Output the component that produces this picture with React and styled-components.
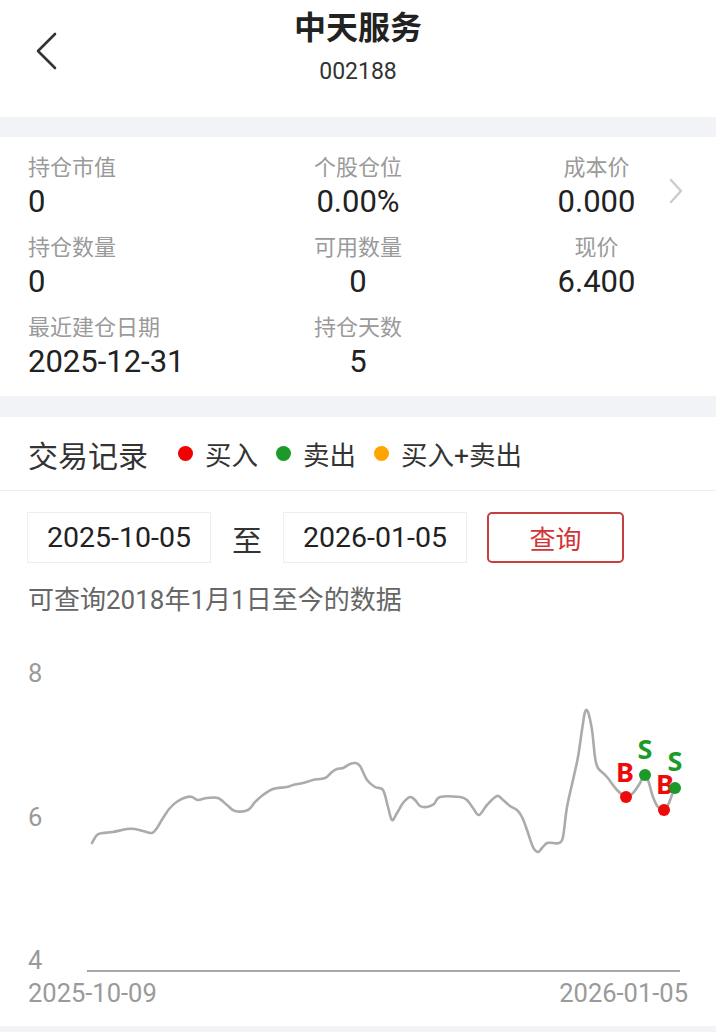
import React from "react";
import styled, { createGlobalStyle } from "styled-components";

const GlobalStyle = createGlobalStyle`
  html, body { margin: 0; padding: 0; background: #fff; }
  body { font-family: Roboto, "Noto Sans CJK SC", sans-serif; color: #222; }
  * { box-sizing: border-box; }
`;

const Page = styled.div`
  width: 716px;
  background: #fff;
`;

const Header = styled.header`
  display: grid;
  grid-template-columns: 1fr auto 1fr;
  align-items: start;
  height: 117px;
`;

const BackButton = styled.button`
  justify-self: start;
  display: flex;
  margin: 32px 0 0 35px;
  padding: 0;
  border: 0;
  background: none;
  cursor: pointer;
`;

const TitleBlock = styled.div`
  display: flex;
  flex-direction: column;
  align-items: center;
  padding-top: 8px;
`;

const Title = styled.h1`
  margin: 0;
  font-size: 32px;
  line-height: 40px;
  font-weight: 700;
  color: #222;
`;

const Code = styled.div`
  margin-top: 10px;
  font-size: 23px;
  line-height: 28px;
  color: #333;
`;

const Band = styled.div`
  height: ${(p) => p.$h}px;
  background: #f2f3f7;
`;

const InfoPanel = styled.section`
  display: flex;
  align-items: flex-start;
  padding: 16px 0 15px 28px;
`;

const InfoGrid = styled.div`
  display: grid;
  grid-template-columns: 232px 196px 201px;
  row-gap: 12px;
`;

const InfoCell = styled.div`
  display: flex;
  flex-direction: column;
  align-items: ${(p) => (p.$left ? "flex-start" : "center")};
  padding-left: ${(p) => p.$inset || 0}px;
`;

const Label = styled.span`
  font-size: 22px;
  line-height: 30px;
  color: #9a9a9a;
`;

const Value = styled.span`
  font-size: 31px;
  line-height: 38px;
  color: #222;
`;

const MoreIcon = styled.span`
  display: flex;
  margin: 25px 0 0 11px;
`;

const SectionHeader = styled.div`
  display: flex;
  align-items: center;
  height: 74px;
  padding-left: 28px;
  border-bottom: 1px solid #eeeeee;
`;

const SectionTitle = styled.h2`
  margin: 0 30px 0 0;
  font-size: 30px;
  font-weight: 400;
  color: #333;
`;

const Legend = styled.div`
  display: flex;
  align-items: center;
  gap: 18px;
`;

const LegendItem = styled.span`
  display: flex;
  align-items: center;
  gap: 12px;
  font-size: 26.5px;
  color: #333;
`;

const Dot = styled.i`
  width: 15px;
  height: 15px;
  border-radius: 50%;
  background: ${(p) => p.$color};
`;

const QueryRow = styled.div`
  display: flex;
  align-items: center;
  padding: 21px 0 0 27px;
`;

const DateInput = styled.div`
  width: 184px;
  height: 51px;
  border: 1px solid #eeeeee;
  display: flex;
  align-items: center;
  justify-content: center;
  font-size: 28.5px;
  color: #222;
`;

const Sep = styled.span`
  width: 72px;
  text-align: center;
  font-size: 30px;
  color: #333;
`;

const QueryButton = styled.button`
  margin-left: 20px;
  width: 137px;
  height: 51px;
  border: 2px solid #c6403f;
  border-radius: 5px;
  background: #fff;
  color: #d23535;
  font-family: inherit;
  font-size: 26px;
  cursor: pointer;
`;

const Note = styled.p`
  margin: 20px 0 0 28px;
  font-size: 26px;
  line-height: 34px;
  color: #666;
`;

const ChartSvg = styled.svg`
  display: block;
`;

const pts = [
  [92, 843], [97, 835], [103, 833], [113, 832], [127, 829], [135, 829], [143, 831], [152, 833],
  [157, 828], [163, 818], [170, 808], [178, 801], [187, 797], [192, 797], [198, 800], [207, 798],
  [218, 798], [227, 805], [235, 811], [248, 810], [255, 802], [263, 795], [273, 789], [287, 787],
  [293, 785], [303, 783], [313, 780], [325, 778], [332, 772], [337, 769], [343, 768], [350, 764],
  [355, 763], [360, 766], [367, 780], [375, 787], [383, 790], [388, 807], [392, 820], [397, 813],
  [403, 803], [410, 797], [415, 800], [420, 806], [427, 807], [434, 804], [440, 797], [460, 797],
  [467, 800], [473, 808], [479, 815], [487, 805], [497, 796], [503, 800], [510, 806], [517, 810],
  [522, 817], [527, 830], [533, 847], [538, 852], [542, 848], [547, 843], [553, 843], [559, 843],
  [563, 837], [567, 807], [573, 780], [578, 757], [582, 730], [585, 712], [588, 712], [592, 730],
  [595, 757], [598, 768], [607, 777], [617, 790], [626, 797], [633, 793], [640, 783], [644, 775],
  [648, 780], [653, 797], [658, 807], [664, 810], [668, 805], [672, 795], [675, 787],
];

function smooth(points) {
  let d = `M${points[0][0]},${points[0][1]}`;
  for (let i = 0; i < points.length - 1; i++) {
    const p0 = points[i - 1] || points[i];
    const p1 = points[i];
    const p2 = points[i + 1];
    const p3 = points[i + 2] || p2;
    const c1x = p1[0] + (p2[0] - p0[0]) / 6;
    const c1y = p1[1] + (p2[1] - p0[1]) / 6;
    const c2x = p2[0] - (p3[0] - p1[0]) / 6;
    const c2y = p2[1] - (p3[1] - p1[1]) / 6;
    d += ` C${c1x.toFixed(1)},${c1y.toFixed(1)} ${c2x.toFixed(1)},${c2y.toFixed(1)} ${p2[0]},${p2[1]}`;
  }
  return d;
}

const trades = [
  { x: 626, y: 797, t: "B", tx: 625, ty: 771 },
  { x: 645, y: 775, t: "S", tx: 645, ty: 748 },
  { x: 664, y: 810, t: "B", tx: 665, ty: 783 },
  { x: 675, y: 788, t: "S", tx: 675, ty: 760 },
];

const RED = "#ee0a0a";
const GREEN = "#1b9a2a";

function Chart() {
  return (
    <ChartSvg width="716" height="409" viewBox="0 617 716 409">
      <g fill="#9a9a9a" fontSize="25.5" fontFamily="Roboto, sans-serif">
        <text x="28" y="673" dominantBaseline="central">8</text>
        <text x="28" y="817" dominantBaseline="central">6</text>
        <text x="28" y="960" dominantBaseline="central">4</text>
        <text x="28" y="993" dominantBaseline="central">2025-10-09</text>
        <text x="688" y="993" dominantBaseline="central" textAnchor="end">2026-01-05</text>
      </g>
      <line x1="87" y1="971" x2="680" y2="971" stroke="#a8a8a8" strokeWidth="2" />
      <path d={smooth(pts)} fill="none" stroke="#ababab" strokeWidth="2.6" strokeLinejoin="round" strokeLinecap="round" />
      {trades.map((tr, i) => (
        <g key={i}>
          <circle cx={tr.x} cy={tr.y} r="6" fill={tr.t === "B" ? RED : GREEN} />
          <text
            x={tr.tx}
            y={tr.ty}
            textAnchor="middle"
            dominantBaseline="central"
            fontSize="27"
            fontWeight="700"
            fontFamily="'Noto Sans', Roboto, sans-serif"
            fill={tr.t === "B" ? RED : GREEN}
          >
            {tr.t}
          </text>
        </g>
      ))}
    </ChartSvg>
  );
}

const info = [
  [
    { label: "持仓市值", value: "0" },
    { label: "个股仓位", value: "0.00%" },
    { label: "成本价", value: "0.000" },
  ],
  [
    { label: "持仓数量", value: "0" },
    { label: "可用数量", value: "0" },
    { label: "现价", value: "6.400" },
  ],
  [
    { label: "最近建仓日期", value: "2025-12-31" },
    { label: "持仓天数", value: "5" },
  ],
];

export default function App() {
  return (
    <Page>
      <GlobalStyle />
      <Header>
        <BackButton aria-label="返回">
          <svg width="24" height="38" viewBox="0 0 24 38">
            <path d="M20 2 L3 19 L20 36" fill="none" stroke="#333" strokeWidth="2.6" strokeLinecap="round" strokeLinejoin="round" />
          </svg>
        </BackButton>
        <TitleBlock>
          <Title>中天服务</Title>
          <Code>002188</Code>
        </TitleBlock>
      </Header>
      <Band $h={20} />
      <InfoPanel>
        <InfoGrid>
          {info.flat().map((c, i) => {
            const col = i % 3;
            return (
              <InfoCell key={i} $left={col === 0} $inset={col === 2 ? 80 : 0}>
                <Label>{c.label}</Label>
                <Value>{c.value}</Value>
              </InfoCell>
            );
          })}
        </InfoGrid>
        <MoreIcon>
          <svg width="16" height="26" viewBox="0 0 16 26">
            <path d="M3 2 L13 13 L3 24" fill="none" stroke="#cccccc" strokeWidth="2.4" strokeLinecap="round" strokeLinejoin="round" />
          </svg>
        </MoreIcon>
      </InfoPanel>
      <Band $h={21} />
      <SectionHeader>
        <SectionTitle>交易记录</SectionTitle>
        <Legend>
          <LegendItem><Dot $color="#f00000" />买入</LegendItem>
          <LegendItem><Dot $color="#1b9a2a" />卖出</LegendItem>
          <LegendItem><Dot $color="#ffa500" />买入+卖出</LegendItem>
        </Legend>
      </SectionHeader>
      <QueryRow>
        <DateInput>2025-10-05</DateInput>
        <Sep>至</Sep>
        <DateInput>2026-01-05</DateInput>
        <QueryButton>查询</QueryButton>
      </QueryRow>
      <Note>可查询2018年1月1日至今的数据</Note>
      <Chart />
      <Band $h={20} />
    </Page>
  );
}
